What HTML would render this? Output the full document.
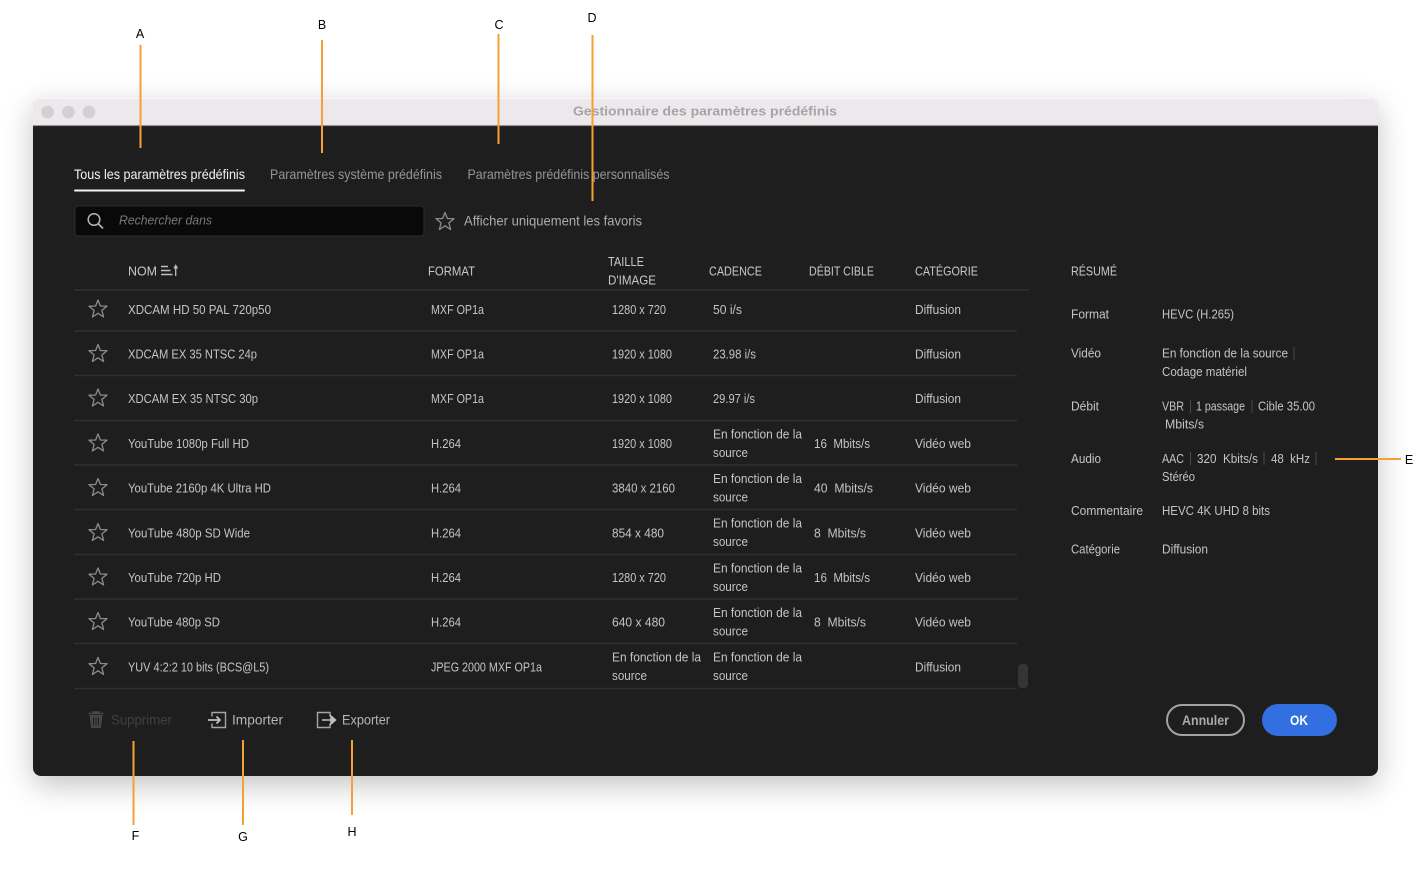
<!DOCTYPE html>
<html lang="fr"><head><meta charset="utf-8"><title>Gestionnaire des paramètres prédéfinis</title>
<style>
html,body{margin:0;padding:0;background:#fff;width:1413px;height:871px;overflow:hidden}
#win{position:absolute;left:33px;top:98px;width:1345px;height:678px;border-radius:8px;background:#1e1e1e;box-shadow:0 9px 30px rgba(0,0,0,.24)}
svg{position:absolute;left:0;top:0}
text{font-family:"Liberation Sans",sans-serif;font-size:13px;fill:#c4c4c4}
.h{fill:#c8c8c8}
.t{font-size:14px;fill:#959595}
.l{fill:#000;font-size:12.5px;text-anchor:middle}
.s{stroke:#4a4a4a;stroke-width:1}
.o{stroke:#f5a033;stroke-width:2}
.r{stroke:#303030;stroke-width:1.5}
</style></head><body>
<div id="win"></div>
<svg width="1413" height="871" viewBox="0 0 1413 871">
<defs><polygon id="st" points="0,-9 2.4,-3 9,-2.8 3.9,1.4 5.6,8 0,4.3 -5.6,8 -3.9,1.4 -9,-2.8 -2.4,-3" fill="none" stroke="#8c8c8c" stroke-width="1.3" stroke-linejoin="round"/></defs>
<path d="M33 126V106a8 8 0 0 1 8-8H1370a8 8 0 0 1 8 8V126Z" fill="#ede8ec"/>
<path d="M34 105a7 7 0 0 1 7-6.500H1370a7 7 0 0 1 7 6.500" fill="none" stroke="#f8f6f8" stroke-width="1"/>
<rect x="33" y="125.500" width="1345" height="1" fill="#3a3a3a"/>
<circle cx="47.5" cy="112" r="6.3" fill="#d3cfd3"/><circle cx="68.5" cy="112" r="6.3" fill="#d3cfd3"/><circle cx="89" cy="112" r="6.3" fill="#d3cfd3"/>
<text x="573" y="115.5" textLength="264" lengthAdjust="spacingAndGlyphs" style="font-weight:700;fill:#a6a4a6">Gestionnaire des paramètres prédéfinis</text>

<text class="t" x="74" y="179" textLength="171" lengthAdjust="spacingAndGlyphs" style="fill:#f2f2f2">Tous les paramètres prédéfinis</text>
<text class="t" x="270" y="179" textLength="172" lengthAdjust="spacingAndGlyphs">Paramètres système prédéfinis</text>
<text class="t" x="467.5" y="179" textLength="202" lengthAdjust="spacingAndGlyphs">Paramètres prédéfinis personnalisés</text>
<rect x="74" y="189.500" width="171" height="2" rx="1" fill="#f4f4f4"/>

<rect x="75" y="206" width="349" height="30" rx="3" fill="#090909" stroke="#2c2c2c"/>
<circle cx="94" cy="219.500" r="5.800" fill="none" stroke="#b5b5b5" stroke-width="1.500"/><path d="M98.300 223.800L103 228.500" stroke="#b5b5b5" stroke-width="1.700"/>
<text x="119" y="224.500" textLength="93" lengthAdjust="spacingAndGlyphs" style="font-style:italic;fill:#777">Rechercher dans</text>
<use href="#st" x="445" y="221.500"/>
<text x="464" y="225.500" textLength="178" lengthAdjust="spacingAndGlyphs" style="font-size:14px;fill:#acacac">Afficher uniquement les favoris</text>

<text class="h" x="128" y="275.500" textLength="29" lengthAdjust="spacingAndGlyphs">NOM</text>
<path d="M161 266.500H168M161 270.500H170.500M161 274.500H172.500" stroke="#bdbdbd" stroke-width="1.500"/><path d="M175.700 276V266M174 268.500L175.700 265.500L177.400 268.500" fill="none" stroke="#bdbdbd" stroke-width="1.300"/>
<text class="h" x="428" y="275.500" textLength="47" lengthAdjust="spacingAndGlyphs">FORMAT</text>
<text class="h" x="608" y="266" textLength="36" lengthAdjust="spacingAndGlyphs">TAILLE</text>
<text class="h" x="608" y="284.500" textLength="48" lengthAdjust="spacingAndGlyphs">D'IMAGE</text>
<text class="h" x="709" y="275.500" textLength="53" lengthAdjust="spacingAndGlyphs">CADENCE</text>
<text class="h" x="809" y="275.500" textLength="65" lengthAdjust="spacingAndGlyphs">DÉBIT CIBLE</text>
<text class="h" x="915" y="275.500" textLength="63" lengthAdjust="spacingAndGlyphs">CATÉGORIE</text>
<text class="h" x="1071" y="275.500" textLength="46" lengthAdjust="spacingAndGlyphs">RÉSUMÉ</text>

<path class="r" d="M74 290H1029M74 331H1017M74 375.500H1017M74 420.500H1017M74 465H1017M74 509.500H1017M74 554.500H1017M74 599H1017M74 643.500H1017M74 688.500H1017"/>

<use href="#st" x="98" y="309"/><use href="#st" x="98" y="353.500"/><use href="#st" x="98" y="398"/><use href="#st" x="98" y="443"/><use href="#st" x="98" y="487.500"/><use href="#st" x="98" y="532.500"/><use href="#st" x="98" y="577"/><use href="#st" x="98" y="621.500"/><use href="#st" x="98" y="666.500"/>

<text x="128" y="314" textLength="143" lengthAdjust="spacingAndGlyphs">XDCAM HD 50 PAL 720p50</text>
<text x="431" y="314" textLength="53" lengthAdjust="spacingAndGlyphs">MXF OP1a</text>
<text x="612" y="314" textLength="54" lengthAdjust="spacingAndGlyphs">1280 x 720</text>
<text x="713" y="314" textLength="29" lengthAdjust="spacingAndGlyphs">50 i/s</text>
<text x="915" y="314" textLength="46" lengthAdjust="spacingAndGlyphs">Diffusion</text>

<text x="128" y="358.500" textLength="129" lengthAdjust="spacingAndGlyphs">XDCAM EX 35 NTSC 24p</text>
<text x="431" y="358.500" textLength="53" lengthAdjust="spacingAndGlyphs">MXF OP1a</text>
<text x="612" y="358.500" textLength="60" lengthAdjust="spacingAndGlyphs">1920 x 1080</text>
<text x="713" y="358.500" textLength="43" lengthAdjust="spacingAndGlyphs">23.98 i/s</text>
<text x="915" y="358.500" textLength="46" lengthAdjust="spacingAndGlyphs">Diffusion</text>

<text x="128" y="403" textLength="130" lengthAdjust="spacingAndGlyphs">XDCAM EX 35 NTSC 30p</text>
<text x="431" y="403" textLength="53" lengthAdjust="spacingAndGlyphs">MXF OP1a</text>
<text x="612" y="403" textLength="60" lengthAdjust="spacingAndGlyphs">1920 x 1080</text>
<text x="713" y="403" textLength="42" lengthAdjust="spacingAndGlyphs">29.97 i/s</text>
<text x="915" y="403" textLength="46" lengthAdjust="spacingAndGlyphs">Diffusion</text>

<text x="128" y="448" textLength="121" lengthAdjust="spacingAndGlyphs">YouTube 1080p Full HD</text>
<text x="431" y="448" textLength="30" lengthAdjust="spacingAndGlyphs">H.264</text>
<text x="612" y="448" textLength="60" lengthAdjust="spacingAndGlyphs">1920 x 1080</text>
<text x="713" y="438.500" textLength="89" lengthAdjust="spacingAndGlyphs">En fonction de la</text>
<text x="713" y="457" textLength="35" lengthAdjust="spacingAndGlyphs">source</text>
<text x="814" y="448" textLength="56" lengthAdjust="spacingAndGlyphs" xml:space="preserve">16  Mbits/s</text>
<text x="915" y="448" textLength="56" lengthAdjust="spacingAndGlyphs">Vidéo web</text>

<text x="128" y="492.500" textLength="143" lengthAdjust="spacingAndGlyphs">YouTube 2160p 4K Ultra HD</text>
<text x="431" y="492.500" textLength="30" lengthAdjust="spacingAndGlyphs">H.264</text>
<text x="612" y="492.500" textLength="63" lengthAdjust="spacingAndGlyphs">3840 x 2160</text>
<text x="713" y="483" textLength="89" lengthAdjust="spacingAndGlyphs">En fonction de la</text>
<text x="713" y="501.500" textLength="35" lengthAdjust="spacingAndGlyphs">source</text>
<text x="814" y="492.500" textLength="59" lengthAdjust="spacingAndGlyphs" xml:space="preserve">40  Mbits/s</text>
<text x="915" y="492.500" textLength="56" lengthAdjust="spacingAndGlyphs">Vidéo web</text>

<text x="128" y="537.500" textLength="122" lengthAdjust="spacingAndGlyphs">YouTube 480p SD Wide</text>
<text x="431" y="537.500" textLength="30" lengthAdjust="spacingAndGlyphs">H.264</text>
<text x="612" y="537.500" textLength="52" lengthAdjust="spacingAndGlyphs">854 x 480</text>
<text x="713" y="527.500" textLength="89" lengthAdjust="spacingAndGlyphs">En fonction de la</text>
<text x="713" y="546" textLength="35" lengthAdjust="spacingAndGlyphs">source</text>
<text x="814" y="537.500" textLength="52" lengthAdjust="spacingAndGlyphs" xml:space="preserve">8  Mbits/s</text>
<text x="915" y="537.500" textLength="56" lengthAdjust="spacingAndGlyphs">Vidéo web</text>

<text x="128" y="582" textLength="93" lengthAdjust="spacingAndGlyphs">YouTube 720p HD</text>
<text x="431" y="582" textLength="30" lengthAdjust="spacingAndGlyphs">H.264</text>
<text x="612" y="582" textLength="54" lengthAdjust="spacingAndGlyphs">1280 x 720</text>
<text x="713" y="572.500" textLength="89" lengthAdjust="spacingAndGlyphs">En fonction de la</text>
<text x="713" y="591" textLength="35" lengthAdjust="spacingAndGlyphs">source</text>
<text x="814" y="582" textLength="56" lengthAdjust="spacingAndGlyphs" xml:space="preserve">16  Mbits/s</text>
<text x="915" y="582" textLength="56" lengthAdjust="spacingAndGlyphs">Vidéo web</text>

<text x="128" y="626.500" textLength="92" lengthAdjust="spacingAndGlyphs">YouTube 480p SD</text>
<text x="431" y="626.500" textLength="30" lengthAdjust="spacingAndGlyphs">H.264</text>
<text x="612" y="626.500" textLength="53" lengthAdjust="spacingAndGlyphs">640 x 480</text>
<text x="713" y="617" textLength="89" lengthAdjust="spacingAndGlyphs">En fonction de la</text>
<text x="713" y="635.500" textLength="35" lengthAdjust="spacingAndGlyphs">source</text>
<text x="814" y="626.500" textLength="52" lengthAdjust="spacingAndGlyphs" xml:space="preserve">8  Mbits/s</text>
<text x="915" y="626.500" textLength="56" lengthAdjust="spacingAndGlyphs">Vidéo web</text>

<text x="128" y="671.500" textLength="141" lengthAdjust="spacingAndGlyphs">YUV 4:2:2 10 bits (BCS@L5)</text>
<text x="431" y="671.500" textLength="111" lengthAdjust="spacingAndGlyphs">JPEG 2000 MXF OP1a</text>
<text x="612" y="661.500" textLength="89" lengthAdjust="spacingAndGlyphs">En fonction de la</text>
<text x="612" y="680" textLength="35" lengthAdjust="spacingAndGlyphs">source</text>
<text x="713" y="661.500" textLength="89" lengthAdjust="spacingAndGlyphs">En fonction de la</text>
<text x="713" y="680" textLength="35" lengthAdjust="spacingAndGlyphs">source</text>
<text x="915" y="671.500" textLength="46" lengthAdjust="spacingAndGlyphs">Diffusion</text>

<rect x="1018" y="664" width="10" height="24" rx="4" fill="#353535"/>

<text x="1071" y="318.500" textLength="38" lengthAdjust="spacingAndGlyphs">Format</text>
<text x="1162" y="318.500" textLength="72" lengthAdjust="spacingAndGlyphs">HEVC (H.265)</text>
<text x="1071" y="357.500" textLength="30" lengthAdjust="spacingAndGlyphs">Vidéo</text>
<text x="1162" y="357.500" textLength="126" lengthAdjust="spacingAndGlyphs">En fonction de la source</text>
<text x="1162" y="376" textLength="85" lengthAdjust="spacingAndGlyphs">Codage matériel</text>
<text x="1071" y="410.500" textLength="28" lengthAdjust="spacingAndGlyphs">Débit</text>
<text x="1162" y="410.500" textLength="22" lengthAdjust="spacingAndGlyphs">VBR</text>
<text x="1196" y="410.500" textLength="49" lengthAdjust="spacingAndGlyphs">1 passage</text>
<text x="1258" y="410.500" textLength="57" lengthAdjust="spacingAndGlyphs">Cible 35.00</text>
<text x="1165" y="428.500" textLength="39" lengthAdjust="spacingAndGlyphs">Mbits/s</text>
<text x="1071" y="463" textLength="30" lengthAdjust="spacingAndGlyphs">Audio</text>
<text x="1162" y="463" textLength="22" lengthAdjust="spacingAndGlyphs">AAC</text>
<text x="1197" y="463" textLength="61" lengthAdjust="spacingAndGlyphs" xml:space="preserve">320  Kbits/s</text>
<text x="1271" y="463" textLength="39" lengthAdjust="spacingAndGlyphs" xml:space="preserve">48  kHz</text>
<text x="1162" y="481" textLength="33" lengthAdjust="spacingAndGlyphs">Stéréo</text>
<text x="1071" y="515" textLength="72" lengthAdjust="spacingAndGlyphs">Commentaire</text>
<text x="1162" y="515" textLength="108" lengthAdjust="spacingAndGlyphs">HEVC 4K UHD 8 bits</text>
<text x="1071" y="553.500" textLength="49" lengthAdjust="spacingAndGlyphs">Catégorie</text>
<text x="1162" y="553.500" textLength="46" lengthAdjust="spacingAndGlyphs">Diffusion</text>
<path class="s" d="M1294 347V360M1190.500 400V413M1252 400V413M1190.500 452V465M1264 452V465M1316 452V465"/>

<path d="M88.500 713.500H103.500M93 713.500V712H99V713.500" fill="none" stroke="#464646" stroke-width="1.500"/>
<path d="M89.500 715H102.500L101 728H91Z" fill="#464646"/><path d="M93.500 717.500V725.500M96 717.500V725.500M98.500 717.500V725.500" stroke="#1e1e1e" stroke-width="1"/>
<text x="111" y="724.500" textLength="61" lengthAdjust="spacingAndGlyphs" style="font-size:14px;fill:#404040">Supprimer</text>
<path d="M212 716.500V712.500H225.500V727.500H212V723.500" fill="none" stroke="#a5a5a5" stroke-width="1.400"/><path d="M208 720H220M216.500 716.500L220 720L216.500 723.500" fill="none" stroke="#c0c0c0" stroke-width="1.700"/>
<path d="M330 716.500V712.500H317.500V727.500H330V723.500" fill="none" stroke="#a5a5a5" stroke-width="1.400"/><path d="M322 720H334M331 716L335.500 720L331 724Z" fill="#c0c0c0" stroke="#c0c0c0" stroke-width="1.500"/>
<text x="232" y="724.500" textLength="51" lengthAdjust="spacingAndGlyphs" style="font-size:14px;fill:#b5b5b5">Importer</text>
<text x="342" y="724.500" textLength="48" lengthAdjust="spacingAndGlyphs" style="font-size:14px;fill:#b5b5b5">Exporter</text>

<rect x="1167" y="705" width="77" height="30" rx="15" fill="none" stroke="#a3a3a3" stroke-width="2"/>
<text x="1182" y="725" textLength="47" lengthAdjust="spacingAndGlyphs" style="font-size:14px;font-weight:700;fill:#a9a9a9">Annuler</text>
<rect x="1262" y="704" width="75" height="32" rx="16" fill="#326fe0"/>
<text x="1290" y="725" textLength="18" lengthAdjust="spacingAndGlyphs" style="font-size:14px;font-weight:700;fill:#fff">OK</text>

<path class="o" d="M140.500 45V148M322 40V153M498.500 34V144M592.500 35V201M1335 459H1401M133.500 741V825M243 740V825M352 740V815"/>
<text class="l" x="140" y="38">A</text><text class="l" x="322" y="29">B</text><text class="l" x="499" y="29">C</text><text class="l" x="592" y="22">D</text><text class="l" x="1409" y="464">E</text><text class="l" x="135.500" y="840">F</text><text class="l" x="243" y="841">G</text><text class="l" x="352" y="836">H</text>
</svg>
</body></html>
